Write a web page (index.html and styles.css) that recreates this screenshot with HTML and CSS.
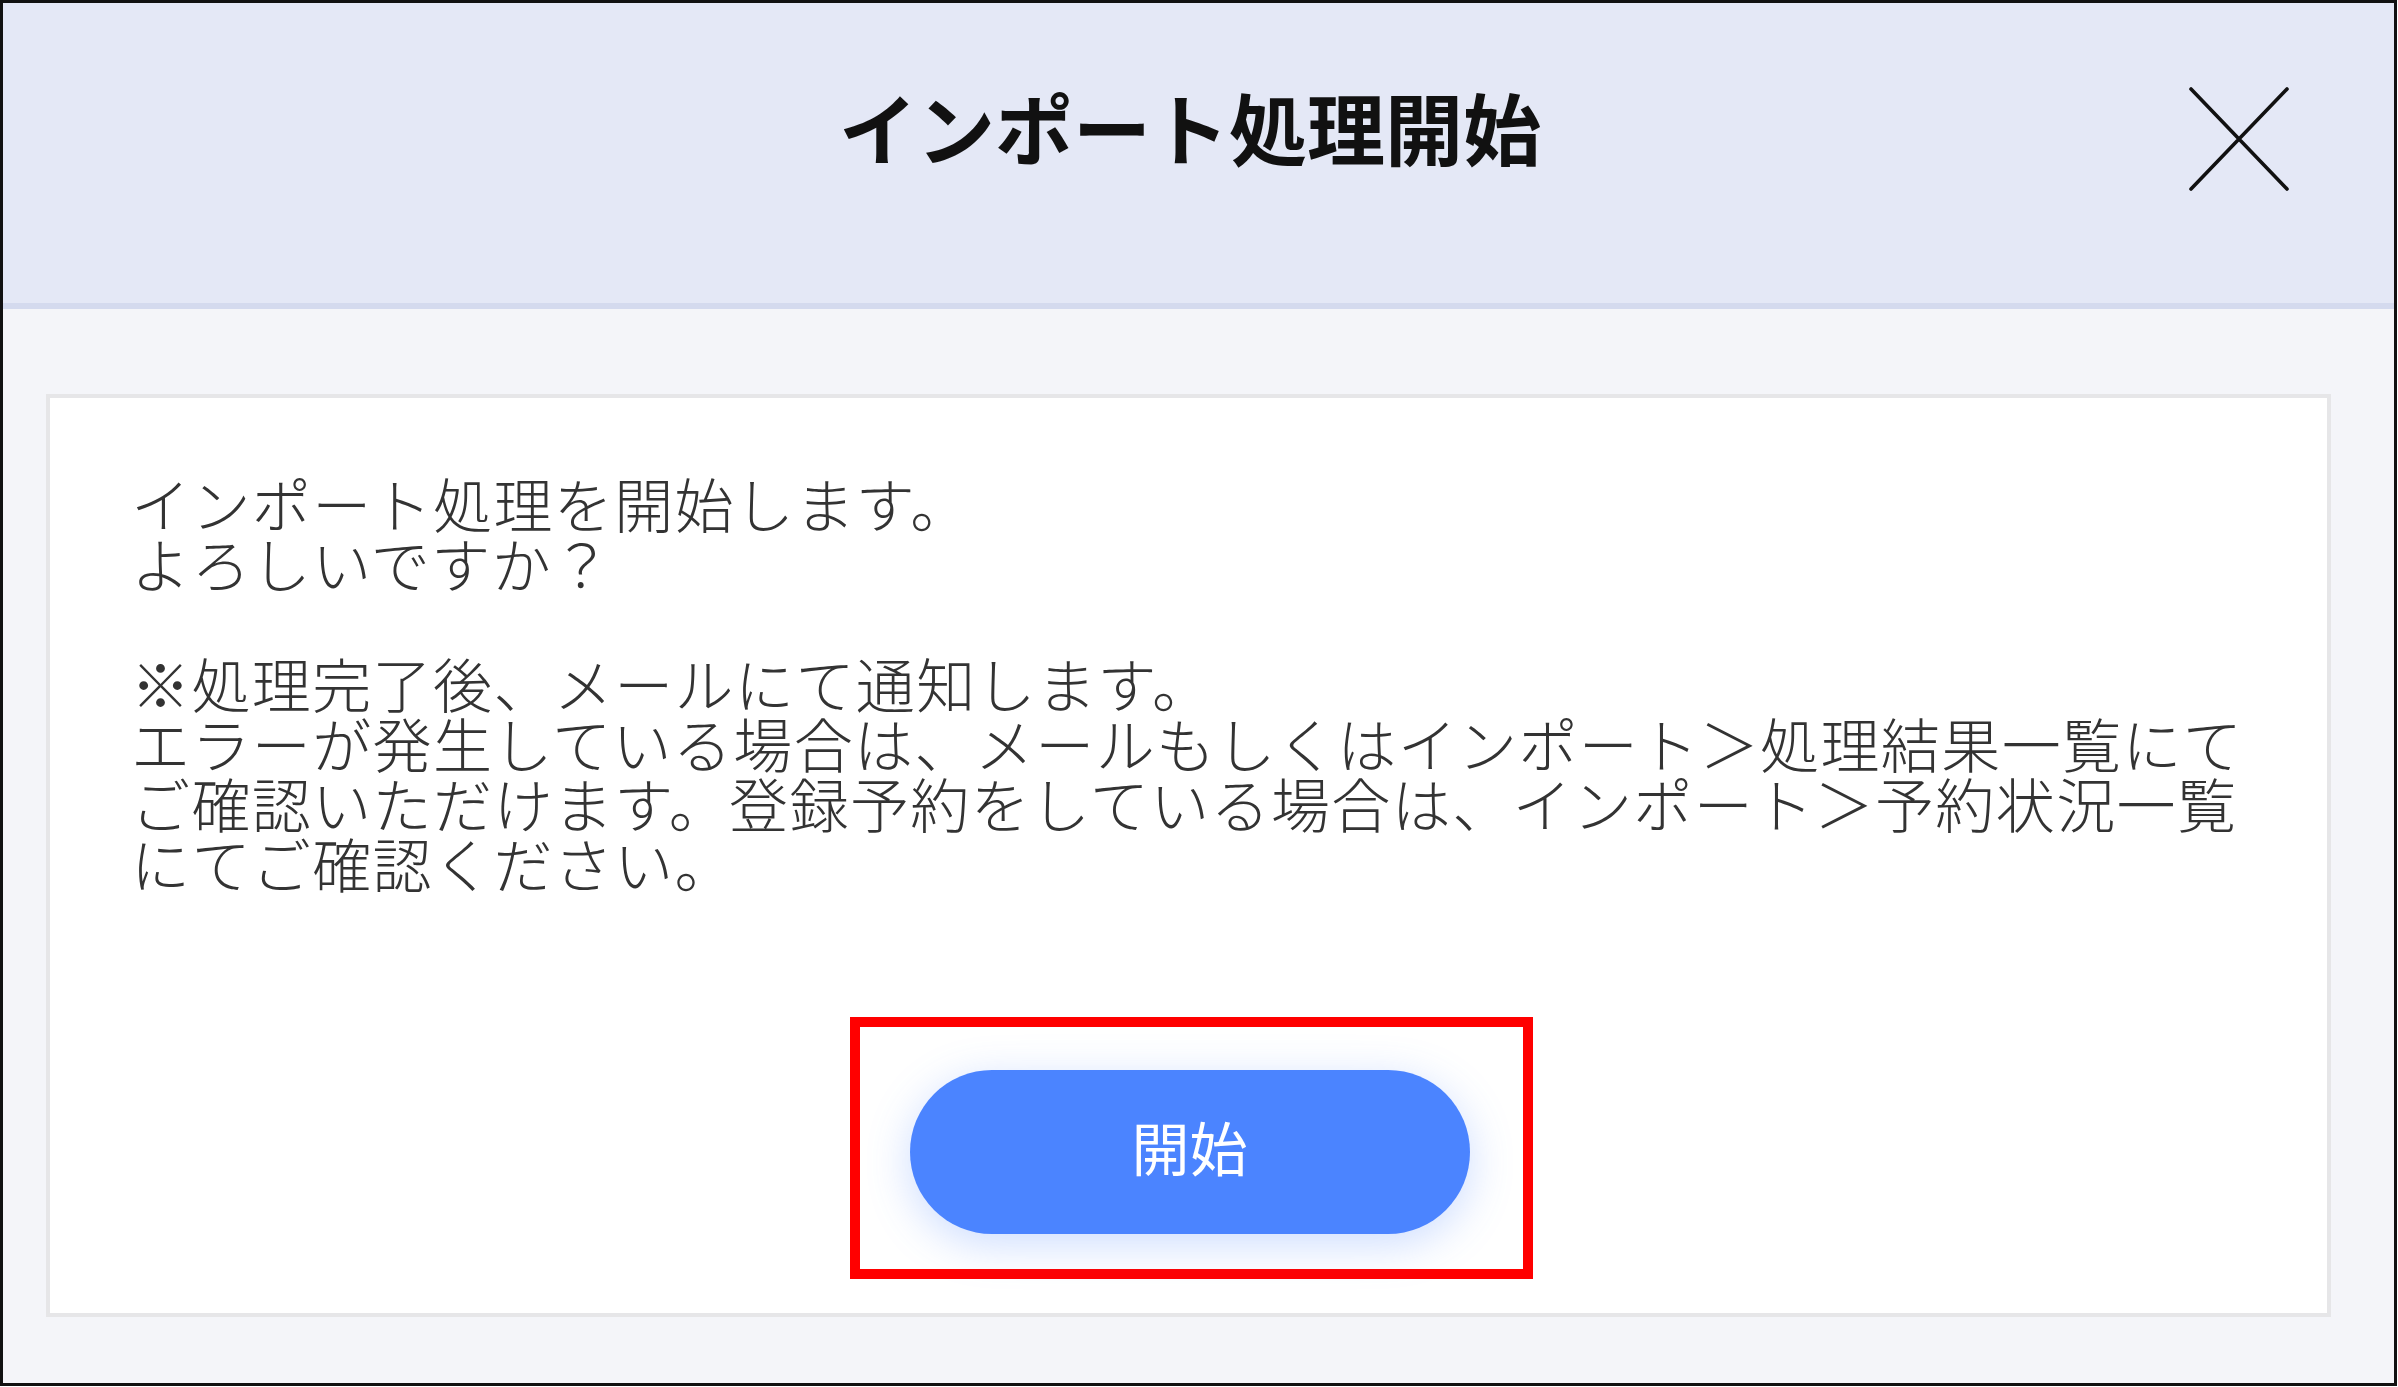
FILE: index.html
```html
<!DOCTYPE html>
<html lang="ja">
<head>
<meta charset="utf-8">
<title>インポート処理開始</title>
<link rel="stylesheet" href="styles.css">
</head>
<body>
<div class="dialog">
  <header class="dialog-header">
    <span class="spacer"></span>
    <h1 class="dialog-title">インポート処理開始</h1>
    <button class="close-btn" type="button" aria-label="閉じる">
      <svg viewBox="0 0 100 104" width="100" height="104">
        <path d="M2 2 L98 102 M98 2 L2 102" stroke="#111" stroke-width="3.6" fill="none" stroke-linecap="round"/>
      </svg>
    </button>
  </header>
  <main class="dialog-body">
    <section class="card">
      <p class="message">インポート処理を開始します。<br>よろしいですか？<br><br>※処理完了後、メールにて通知します。<br>エラーが発生している場合は、メールもしくはインポート＞処理結果一覧にて<br>ご確認いただけます。登録予約をしている場合は、インポート＞予約状況一覧<br>にてご確認ください。</p>
      <div class="actions">
        <div class="highlight">
          <button class="start-btn" type="button">開始</button>
        </div>
      </div>
    </section>
  </main>
</div>
</body>
</html>
```

FILE: styles.css
```css
* {
  box-sizing: border-box;
}

html, body {
  margin: 0;
  padding: 0;
  background: #ffffff;
}

body {
  font-family: "Noto Sans CJK JP", "Noto Sans", sans-serif;
}

.dialog {
  width: 2397px;
  height: 1386px;
  border: 3px solid #111111;
  background: #f4f5f9;
  display: flex;
  flex-direction: column;
}

.dialog-header {
  height: 306px;
  flex: none;
  background: #e4e8f6;
  border-bottom: 6px solid #d4daee;
  display: grid;
  grid-template-columns: 1fr auto 1fr;
  align-items: start;
  padding-top: 84px;
}

.dialog-title {
  margin: 0 17px 0 0;
  font-size: 78px;
  line-height: 1;
  font-weight: 700;
  color: #111111;
  white-space: nowrap;
}

.close-btn {
  justify-self: end;
  margin-right: 105px;
  padding: 0;
  border: 0;
  background: transparent;
  width: 100px;
  height: 104px;
  display: block;
}

.close-btn svg {
  display: block;
}

.dialog-body {
  flex: 1;
  padding: 85px 63px 67px 43px;
  display: flex;
}

.card {
  flex: 1;
  background: #ffffff;
  border: 4px solid #e6e6e8;
  padding: 75px 40px 34px 81px;
  display: flex;
  flex-direction: column;
}

.message {
  margin: 0;
  font-size: 59px;
  line-height: 60px;
  letter-spacing: 1.4px;
  font-weight: 300;
  color: #333333;
  white-space: nowrap;
}

.actions {
  margin-top: 124px;
  display: flex;
  justify-content: center;
  padding-left: 4px;
  padding-right: 40px;
}

.highlight {
  border: 10px solid #ff0000;
  padding: 43px 53px 35px 50px;
}

.start-btn {
  display: block;
  width: 560px;
  height: 164px;
  border: 0;
  border-radius: 82px;
  background: #4b84ff;
  color: #ffffff;
  font-family: "Noto Sans CJK JP", "Noto Sans", sans-serif;
  font-size: 58px;
  font-weight: 400;
  line-height: 1;
  padding: 0 0 12px 0;
  box-shadow: 0 10px 44px rgba(75, 132, 255, 0.28);
}
```
